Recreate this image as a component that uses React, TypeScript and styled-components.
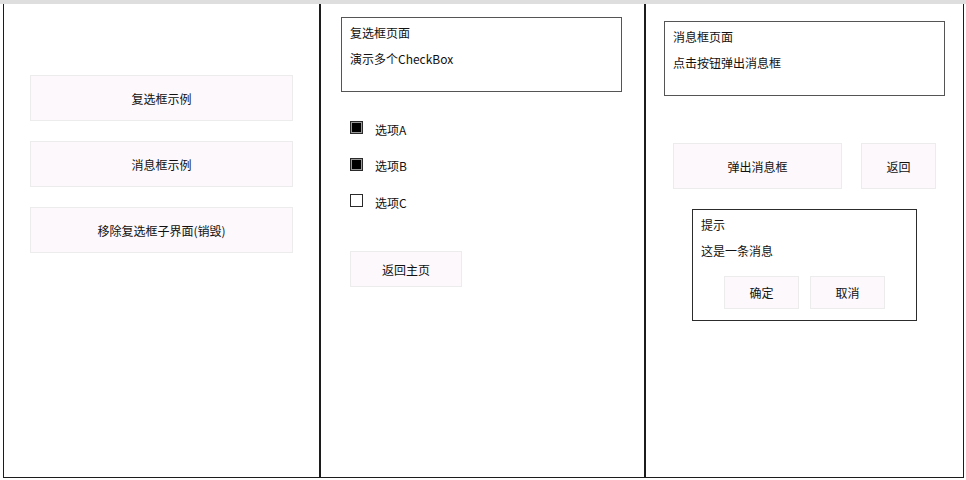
import React from "react";
import styled, { createGlobalStyle } from "styled-components";

const Global = createGlobalStyle`
  html, body { margin: 0; padding: 0; background: #ffffff; }
  body { font-family: "Noto Sans CJK SC", "Noto Sans", sans-serif; font-size: 12px; color: #111; }
`;

const Page = styled.div`
  width: 966px;
  height: 480px;
  box-sizing: border-box;
  border-top: 4px solid #dedede;
  display: flex;
  padding-left: 3px;
  background: #fff;
`;

const Panel = styled.div<{ $w: number; $pt: number; $pl: number }>`
  width: ${(p) => p.$w}px;
  height: 474px;
  box-sizing: border-box;
  border: 1px solid #1c1c1c;
  border-top: none;
  display: flex;
  flex-direction: column;
  padding-top: ${(p) => p.$pt}px;
  padding-left: ${(p) => p.$pl}px;
`;

const MenuList = styled.div`
  display: flex;
  flex-direction: column;
  gap: 20px;
  padding-right: 26px;
`;

const Button = styled.button<{ $w?: number; $h: number }>`
  width: ${(p) => (p.$w ? `${p.$w}px` : "100%")};
  height: ${(p) => p.$h}px;
  box-sizing: border-box;
  background: #fcf8fc;
  border: 1px solid #ececec;
  border-radius: 0;
  font-family: "Noto Sans CJK SC", "Noto Sans", sans-serif;
  font-size: 12px;
  color: #111;
  padding: 0;
  flex-shrink: 0;
  cursor: pointer;
`;

const InfoBox = styled.div<{ $h: number; $w: number; $color: string }>`
  width: ${(p) => p.$w}px;
  height: ${(p) => p.$h}px;
  box-sizing: border-box;
  border: 1px solid ${(p) => p.$color};
  padding: 7px 8px 0;
  display: flex;
  flex-direction: column;
  gap: 10px;
  flex-shrink: 0;
`;

const Line = styled.div`
  line-height: 16px;
  height: 16px;
`;

const CheckList = styled.div`
  margin-top: 27px;
  margin-left: 9px;
  display: flex;
  flex-direction: column;
  gap: 16.5px;
`;

const CheckRow = styled.label`
  display: flex;
  align-items: center;
  height: 20px;
  gap: 12px;
`;

const Box = styled.span<{ $checked: boolean }>`
  width: 13px;
  height: 13px;
  box-sizing: border-box;
  border: 1px solid #2a2a2a;
  background: ${(p) => (p.$checked ? "#000" : "#fff")};
  box-shadow: ${(p) => (p.$checked ? "inset 0 0 0 1px #9a9a9a" : "none")};
  margin-top: -3px;
`;

const BackWrap = styled.div`
  margin-top: 39px;
  margin-left: 9px;
`;

const ButtonRow = styled.div<{ $gap: number; $mt: number; $ml: number }>`
  display: flex;
  gap: ${(p) => p.$gap}px;
  margin-top: ${(p) => p.$mt}px;
  margin-left: ${(p) => p.$ml}px;
`;

const Dialog = styled.div`
  width: 225px;
  height: 112px;
  box-sizing: border-box;
  border: 1px solid #2c2c2c;
  margin-top: 20px;
  margin-left: 28px;
  padding: 7px 8px 0;
  display: flex;
  flex-direction: column;
  gap: 10px;
`;

const DialogButtons = styled.div`
  display: flex;
  justify-content: center;
  gap: 11px;
  margin-top: 7px;
`;

export default function App() {
  return (
    <>
      <Global />
      <Page>
        <Panel $w={317} $pt={71} $pl={26}>
          <MenuList>
            <Button $h={46}>复选框示例</Button>
            <Button $h={46}>消息框示例</Button>
            <Button $h={46}>移除复选框子界面(销毁)</Button>
          </MenuList>
        </Panel>
        <Panel $w={325} $pt={13} $pl={20}>
          <InfoBox $w={281} $h={75} $color="#555">
            <Line>复选框页面</Line>
            <Line>演示多个CheckBox</Line>
          </InfoBox>
          <CheckList>
            <CheckRow>
              <Box $checked />
              <span>选项A</span>
            </CheckRow>
            <CheckRow>
              <Box $checked />
              <span>选项B</span>
            </CheckRow>
            <CheckRow>
              <Box $checked={false} />
              <span>选项C</span>
            </CheckRow>
          </CheckList>
          <BackWrap>
            <Button $w={112} $h={36}>返回主页</Button>
          </BackWrap>
        </Panel>
        <Panel $w={319} $pt={17} $pl={18}>
          <InfoBox $w={281} $h={75} $color="#555">
            <Line>消息框页面</Line>
            <Line>点击按钮弹出消息框</Line>
          </InfoBox>
          <ButtonRow $gap={19} $mt={47} $ml={9}>
            <Button $w={169} $h={46}>弹出消息框</Button>
            <Button $w={75} $h={46}>返回</Button>
          </ButtonRow>
          <Dialog>
            <Line>提示</Line>
            <Line>这是一条消息</Line>
            <DialogButtons>
              <Button $w={75} $h={33}>确定</Button>
              <Button $w={75} $h={33}>取消</Button>
            </DialogButtons>
          </Dialog>
        </Panel>
      </Page>
    </>
  );
}
